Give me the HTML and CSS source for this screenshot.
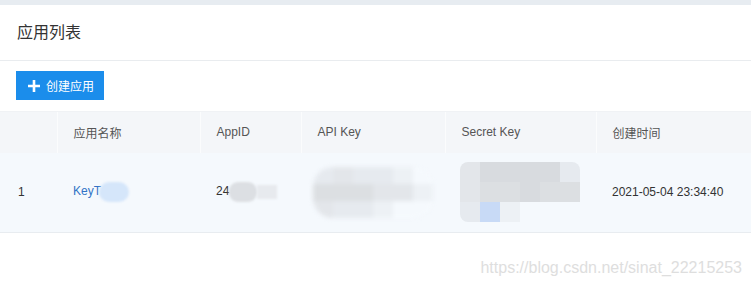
FILE: index.html
```html
<!DOCTYPE html>
<html lang="zh-CN">

<head>
  <meta charset="UTF-8">
  <title>应用列表</title>
  <link rel="stylesheet" href="styles.css">
</head>

<body>
  <div class="topbar"></div>

  <div class="panel">
    <div class="panel-head">应用列表</div>

    <div class="toolbar">
      <button class="btn-create">
        <svg width="12" height="12" viewBox="0 0 12 12">
          <path d="M6 0v12M0 6h12" stroke="#fff" stroke-width="2.6" />
        </svg>
        创建应用
      </button>
    </div>

    <table class="app-table">
      <thead>
        <tr>
          <th class="col-idx"></th>
          <th class="col-name">应用名称</th>
          <th class="col-id">AppID</th>
          <th class="col-api">API Key</th>
          <th class="col-secret">Secret Key</th>
          <th>创建时间</th>
        </tr>
      </thead>
      <tbody>
        <tr>
          <td>1</td>
          <td><a class="app-link" href="#">KeyT<span class="blob blob-blue"></span></a></td>
          <td>24<span class="blob blob-grey"></span><span class="blob blob-light"></span></td>
          <td>
            <div class="mosaic mosaic-api">
              <i class="t4"></i><i class="t3"></i><i class="t4"></i><i class="t4"></i><i class="t5"></i><i class="t6"></i>
              <i class="t2"></i><i class="t2"></i><i class="t2"></i><i class="t3"></i><i class="t3"></i><i class="t5"></i>
              <i class="t3"></i><i class="t4"></i><i class="t4"></i><i class="t5"></i><i class="t6"></i><i class="t6"></i>
            </div>
          </td>
          <td>
            <div class="mosaic mosaic-secret">
              <i class="t3"></i><i class="t1"></i><i class="t1"></i><i class="t1"></i><i class="t1"></i><i class="t4"></i>
              <i class="t3"></i><i class="t2"></i><i class="t2"></i><i class="t1"></i><i class="t2"></i><i class="t2"></i>
              <i class="t4"></i><i class="tb"></i><i class="t5"></i><i class="t6"></i><i class="t6"></i><i class="t6"></i>
            </div>
          </td>
          <td>2021-05-04 23:34:40</td>
        </tr>
      </tbody>
    </table>

    <div class="watermark">https://blog.csdn.net/sinat_22215253</div>
  </div>
</body>

</html>
```
FILE: styles.css
```css
* {
  box-sizing: border-box;
}

body {
  margin: 0;
  background: #fff;
  font-family: "Liberation Sans", "Noto Sans CJK SC", sans-serif;
  color: #333;
}

.topbar {
  height: 5px;
  background: #e7ecf1;
}

.panel-head {
  height: 56px;
  padding: 0 17px;
  line-height: 55px;
  font-size: 16px;
  color: #333;
  border-bottom: 1px solid #e9ecef;
}

.toolbar {
  padding: 10px 16px 11px;
}

.btn-create {
  display: flex;
  align-items: center;
  gap: 6px;
  height: 29px;
  width: 88px;
  padding: 0 0 0 12px;
  border: none;
  border-radius: 0;
  background: #1b8deb;
  color: #fff;
  font-family: inherit;
  font-size: 12px;
}

.app-table {
  width: 100%;
  table-layout: fixed;
  border-collapse: collapse;
  font-size: 12px;
}

.app-table th {
  height: 41px;
  padding: 0 16px;
  text-align: left;
  font-weight: normal;
  color: #555;
  background: #f4f6f9;
  border-top: 1px solid #f0f2f5;
  border-left: 1px solid #fbfcfd;
}

.app-table th:first-child {
  border-left: none;
}

.col-idx {
  width: 57px;
}

.col-name {
  width: 143px;
}

.col-id {
  width: 101px;
}

.col-api {
  width: 144px;
}

.col-secret {
  width: 151px;
}

.app-table td {
  height: 80px;
  padding: 0 16px;
  background: #f5f9fd;
  border-bottom: 1px solid #e8ecf0;
  white-space: nowrap;
  overflow: hidden;
}

.app-table td:first-child {
  padding-left: 18px;
}

.app-link {
  color: #3274c6;
  text-decoration: none;
}

.blob {
  display: inline-block;
  vertical-align: middle;
  height: 20px;
  filter: blur(1px);
}

.blob-blue {
  width: 30px;
  margin-left: -2px;
  border-radius: 10px;
  background: #d5e6fa;
}

.blob-grey {
  width: 28px;
  border-radius: 9px;
  background: #dcdfe3;
}

.blob-light {
  width: 20px;
  height: 14px;
  background: #e7eaee;
}

.mosaic {
  display: grid;
  grid-template-columns: repeat(6, 20px);
  grid-auto-rows: 20px;
  width: 120px;
  border-radius: 8px;
  overflow: hidden;
}

.mosaic-api {
  margin-left: -4px;
  grid-auto-rows: 17px;
  border-radius: 20px;
  filter: blur(2px);
}

.mosaic-secret {
  margin-left: -1px;
}

.mosaic i {
  display: block;
}

.t1 {
  background: #d8dbdf;
}

.t2 {
  background: #dcdfe2;
}

.t3 {
  background: #e3e6ea;
}

.t4 {
  background: #e6eaef;
}

.t5 {
  background: #edf1f5;
}

.t6 {
  background: #f5f9fd;
}

.tb {
  background: #c8daf6;
}

.watermark {
  margin-top: 26px;
  padding-right: 9px;
  text-align: right;
  font-size: 16px;
  color: #dedede;
}
```
